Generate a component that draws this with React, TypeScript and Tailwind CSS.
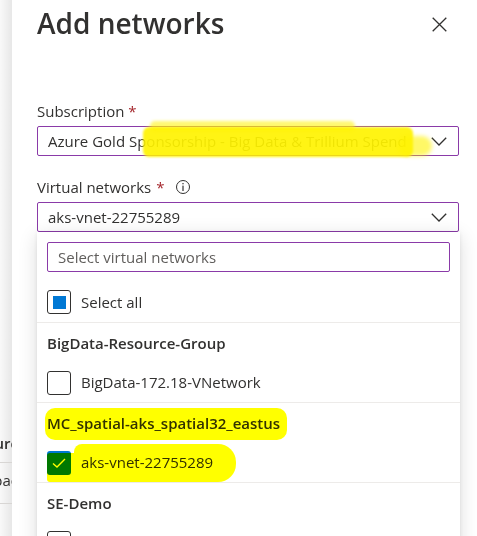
import React from "react";

function Chevron() {
  return (
    <svg width="16" height="9" viewBox="0 0 16 9" fill="none" className="shrink-0">
      <polyline points="0.8,0.8 8,8 15.2,0.8" stroke="#323130" strokeWidth="1.3" fill="none" />
    </svg>
  );
}

function CheckBox({ state }: { state: "none" | "ind" | "checked" }) {
  if (state === "checked") {
    return (
      <div className="w-[24px] h-[24px] shrink-0 rounded-[3px] bg-[#0078d4] flex items-center justify-center">
        <svg width="16" height="12" viewBox="0 0 16 12" fill="none">
          <polyline points="2,6.5 6,10 14,2" stroke="#ffffff" strokeWidth="1.4" fill="none" />
        </svg>
      </div>
    );
  }
  return (
    <div className="w-[24px] h-[24px] shrink-0 rounded-[3px] border border-[#323130] flex items-center justify-center bg-white">
      {state === "ind" && <div className="w-[13px] h-[13px] bg-[#0078d4]" />}
    </div>
  );
}

function GroupHeader({ text }: { text: string }) {
  return (
    <div className="h-[40px] flex items-center px-[10px] font-semibold text-[15px] text-[#323130]">{text}</div>
  );
}

function Option({ text, state }: { text: string; state: "none" | "ind" | "checked" }) {
  return (
    <div className="h-[39px] flex items-center gap-[10px] px-[10px] text-[15px] text-[#323130]">
      <CheckBox state={state} />
      <span>{text}</span>
    </div>
  );
}

function Divider() {
  return <div className="h-px bg-[#edebe9]" />;
}

export default function App() {
  return (
    <div className="relative w-[477px] h-[536px] overflow-hidden bg-white text-[#323130] font-['Open_Sans','Noto_Sans',sans-serif]">
      <div className="flex h-full">
        {/* page behind the blade */}
        <div className="w-[12px] shrink-0 overflow-hidden bg-linear-to-r from-[#f9f9f9] to-[#e7e7e7] text-[15px]">
          <div className="mt-[431px] h-[24px] leading-[24px] flex justify-end font-semibold whitespace-nowrap">
            <span className="-mr-[6px]">Resourc</span>
          </div>
          <div className="h-[8px] border-b border-[#d8d6d4]" />
          <div className="h-[41px] pt-[5px] leading-[24px] flex justify-end whitespace-nowrap border-b border-[#d8d6d4]">
            <span className="-mr-[6px]">spac</span>
          </div>
        </div>

        {/* blade */}
        <div className="relative flex-1 bg-white pl-[25px] pr-[18px]">
          <div className="mt-[5px] h-[36px] flex items-center justify-between">
            <h1 className="text-[28px] leading-[36px] font-semibold text-[#323130]">Add networks</h1>
            <svg width="15" height="15" viewBox="0 0 15 15" className="mr-[12px] mt-[2px]">
              <path d="M0.7 0.7 L14.3 14.3 M14.3 0.7 L0.7 14.3" stroke="#323130" strokeWidth="1.3" />
            </svg>
          </div>

          <div className="mt-[60px] h-[20px] leading-[20px] text-[15px]">
            Subscription <span className="text-[#a4262c]">*</span>
          </div>
          <div className="mt-[5px] h-[30px] border border-[#8a3aa8] rounded-[2px] flex items-center justify-between pl-[10px] pr-[11px] text-[15px]">
            <span className="whitespace-nowrap">Azure Gold Sponsorship - Big Data &amp; Trillium Spend</span>
            <Chevron />
          </div>

          <div className="mt-[21px] h-[20px] leading-[20px] text-[15px] flex items-center">
            <span>Virtual networks</span>
            <span className="text-[#a4262c] ml-[5px]">*</span>
            <span className="ml-[12px] w-[14px] h-[14px] rounded-full border border-[#323130] flex items-center justify-center">
              <svg width="4" height="8" viewBox="0 0 4 8">
                <rect x="1.4" y="0" width="1.2" height="1.3" fill="#323130" />
                <rect x="1.4" y="2.6" width="1.2" height="5.4" fill="#323130" />
              </svg>
            </span>
          </div>
          <div className="relative mt-[5px]">
            <div className="h-[30px] border border-[#8a3aa8] rounded-[2px] flex items-center justify-between pl-[10px] pr-[11px] text-[15px]">
              <span>aks-vnet-22755289</span>
              <Chevron />
            </div>

            {/* dropdown callout */}
            <div className="absolute left-0 -right-px top-full bg-white shadow-[0_4px_18px_rgba(0,0,0,0.14),0_1px_4px_rgba(0,0,0,0.08)]">
              <div className="px-[10px] pt-[10px] pb-[10px]">
                <div className="h-[30px] border border-[#8a3aa8] rounded-[2px] flex items-center pl-[10px] text-[15px] text-[#605e5c]">
                  Select virtual networks
                </div>
              </div>
              <div className="h-[40px] flex items-center gap-[10px] px-[10px] text-[15px]">
                <CheckBox state="ind" />
                <span>Select all</span>
              </div>
              <Divider />
              <GroupHeader text="BigData-Resource-Group" />
              <Option text="BigData-172.18-VNetwork" state="none" />
              <Divider />
              <GroupHeader text="MC_spatial-aks_spatial32_eastus" />
              <Option text="aks-vnet-22755289" state="checked" />
              <Divider />
              <GroupHeader text="SE-Demo" />
              <Option text="" state="none" />
            </div>
          </div>
        </div>
      </div>

      {/* marker highlights */}
      <div className="pointer-events-none absolute inset-0">
        <div className="absolute left-[143px] top-[127px] w-[270px] h-[30px] rounded-[6px] bg-[#fff300]/92 blur-[1px]" />
        <div className="absolute left-[150px] top-[121px] w-[205px] h-[10px] rounded-full bg-[#fff300]/55 blur-[1.5px]" />
        <div className="absolute left-[398px] top-[136px] w-[34px] h-[20px] rounded-full bg-[#fff300]/60 blur-[2px]" />

        <div className="absolute left-[45px] top-[408px] w-[242px] h-[32px] rounded-[10px] bg-[#ffff00] mix-blend-multiply" />
        <div className="absolute left-[47px] top-[453px] w-[48px] h-[29px] rounded-[3px] bg-[#ffff00] mix-blend-multiply" />
        <div className="absolute left-[74px] top-[444px] w-[162px] h-[38px] rounded-l-[8px] rounded-r-[18px] bg-[#ffff00] mix-blend-multiply" />
      </div>
    </div>
  );
}
